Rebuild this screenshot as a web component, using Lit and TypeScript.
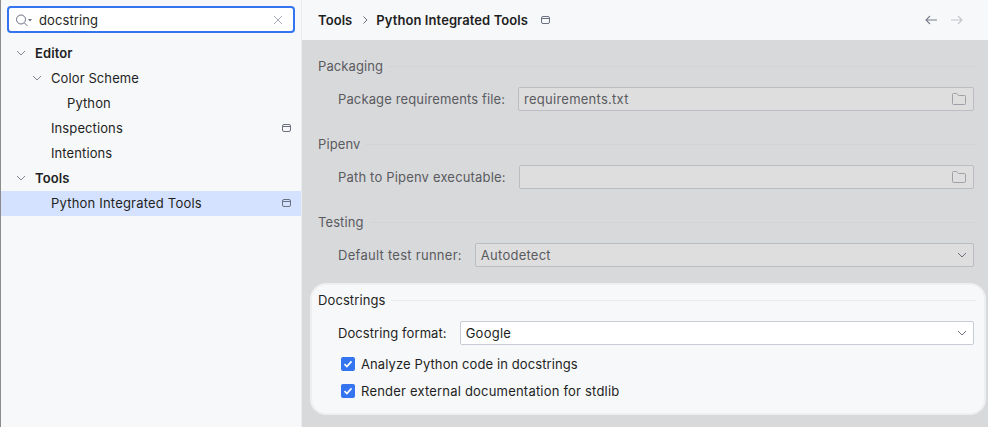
import {LitElement, html, css, svg} from "lit"
import {customElement} from "lit/decorators.js"

const chevronDown = html`<svg class="chev" viewBox="0 0 12 12"><path d="M2 4l4 4 4-4" fill="none" stroke="currentColor" stroke-width="1"/></svg>`

const pinIcon = html`<svg class="pin" viewBox="0 0 12 12"><rect x="1.5" y="2.5" width="8" height="7" rx="1.5" fill="none" stroke="currentColor"/><path d="M1.5 4.5h8" stroke="currentColor"/></svg>`

const folderIcon = html`<svg class="folder" viewBox="0 0 16 16"><path d="M1.5 3.5a1 1 0 011-1h3.2l1.8 2h6a1 1 0 011 1v7a1 1 0 01-1 1h-11a1 1 0 01-1-1z" fill="none" stroke="currentColor"/></svg>`

const checkMark = svg`<path d="M3.5 7.2l2.4 2.4 4.6-5.2" fill="none" stroke="#fff" stroke-width="1.7"/>`

interface TreeRow {
  label: string
  depth: number
  open?: boolean
  bold?: boolean
  pin?: boolean
  selected?: boolean
}

const rows: TreeRow[] = [
  {label: "Editor", depth: 0, open: true, bold: true},
  {label: "Color Scheme", depth: 1, open: true},
  {label: "Python", depth: 2},
  {label: "Inspections", depth: 1, pin: true},
  {label: "Intentions", depth: 1},
  {label: "Tools", depth: 0, open: true, bold: true},
  {label: "Python Integrated Tools", depth: 1, pin: true, selected: true},
]

@customElement("app-root")
export class AppRoot extends LitElement {
  static styles = css`
    :host {
      display: flex;
      width: 988px;
      height: 427px;
      overflow: hidden;
      font-family: Inter, "Liberation Sans", sans-serif;
      font-size: 13px;
      color: #1e1f22;
    }
    .sidebar {
      width: 302px;
      flex: none;
      box-sizing: border-box;
      background: #f7f8fa;
      border-left: 1px solid #8c8c8c;
      border-right: 1px solid #ebecf0;
    }
    .search {
      display: flex;
      align-items: center;
      height: 27px;
      box-sizing: border-box;
      margin: 6px 6px 8px 6px;
      padding: 0 10px 0 6px;
      background: #fff;
      border: 2px solid #3574f0;
      border-radius: 4px;
      letter-spacing: 0.1px;
    }
    .search .glass { width: 18px; height: 16px; color: #6c707e; flex: none; }
    .search span { flex: 1; margin-left: 6px; }
    .search .clear { width: 10px; height: 10px; color: #a8adbd; flex: none; }
    .row {
      display: flex;
      align-items: center;
      height: 25px;
      box-sizing: border-box;
      padding-right: 8px;
      padding-bottom: 1px;
    }
    .row.selected { background: #d4e2ff; }
    .row.bold { font-weight: 600; }
    .arrow { width: 12px; height: 12px; flex: none; color: #818594; margin-right: 8px; }
    .arrow-space { width: 12px; flex: none; margin-right: 8px; }
    .row .label { flex: 1; letter-spacing: 0.1px; }
    .row.selected .label { letter-spacing: 0.2px; }
    .pin { width: 12px; height: 12px; color: #6c707e; flex: none; }
    .main { flex: 1; display: flex; flex-direction: column; background: #d8d9db; min-width: 0; }
    .header {
      display: flex;
      align-items: center;
      height: 40px;
      flex: none;
      box-sizing: border-box;
      padding: 0 23px 0 16px;
      background: #f7f8fa;
      font-weight: 600;
      letter-spacing: 0.08px;
    }
    .header .sep { width: 12px; height: 12px; margin: 0 5px 0 7px; color: #6c707e; }
    .header .pin { margin-left: 12px; }
    .header .nav { margin-left: auto; display: flex; gap: 10px; }
    .nav svg { width: 16px; height: 16px; }
    .content { padding: 16px 2px 0 8px; }
    .group { padding: 0 10px 0 8px; color: #5a5b5f; }
    .group + .group { margin-top: 23px; }
    .title { display: flex; align-items: center; height: 20px; gap: 6px; letter-spacing: 0.1px; }
    .title::after { content: ""; flex: 1; height: 1px; background: #d2d3d6; }
    .field {
      display: flex;
      align-items: center;
      gap: 13px;
      margin: 11px 2px 0 20px;
      height: 24px;
    }
    .field .box {
      flex: 1;
      align-self: stretch;
      display: flex;
      align-items: center;
      justify-content: space-between;
      box-sizing: border-box;
      padding: 0 5px 0 5px;
      border: 1px solid #bcbdc2;
      border-radius: 2px;
      background: #dedede;
      letter-spacing: 0.25px;
    }
    .chev { width: 12px; height: 12px; color: #6c707e; }
    .folder { width: 16px; height: 16px; color: #a0a1a6; margin-right: 1px; }
    .group + .group.highlight {
      margin-top: 16px;
      padding: 5px 8px 9px 6px;
      background: #f7f8fa;
      border: 2px solid #eeeff1;
      border-radius: 16px;
      color: #1e1f22;
    }
    .highlight .title::after { background: #ebecf0; }
    .highlight .box { background: #fff; border-color: #c9ccd6; }
    .check {
      display: flex;
      align-items: center;
      gap: 6px;
      height: 27px;
      margin-left: 23px;
      letter-spacing: 0.1px;
    }
    .check.wide { letter-spacing: 0.2px; }
    .check svg { width: 14px; height: 14px; flex: none; }
    .checks { margin-top: 5px; }
  `

  renderRow(row: TreeRow) {
    const pad = 14 + row.depth * 16
    return html`
      <div class="row ${row.selected ? "selected" : ""} ${row.bold ? "bold" : ""}" style="padding-left: ${pad}px">
        ${row.open
          ? html`<svg class="arrow" viewBox="0 0 12 12"><path d="M2 4l4 4 4-4" fill="none" stroke="currentColor"/></svg>`
          : html`<span class="arrow-space"></span>`}
        <span class="label">${row.label}</span>
        ${row.pin ? pinIcon : ""}
      </div>
    `
  }

  // spacing: the source font is hinted, so each label runs a little wider or narrower
  renderField(label: string, spacing: number, value: string, trailing: unknown) {
    return html`
      <div class="field">
        <span style="letter-spacing: ${spacing}px">${label}</span>
        <div class="box"><span>${value}</span>${trailing}</div>
      </div>
    `
  }

  renderCheck(label: string, wide = false) {
    return html`
      <div class="check ${wide ? "wide" : ""}">
        <svg viewBox="0 0 14 14"><rect width="14" height="14" rx="2" fill="#3574f0"/>${checkMark}</svg>
        <span>${label}</span>
      </div>
    `
  }

  render() {
    return html`
      <aside class="sidebar">
        <div class="search">
          <svg class="glass" viewBox="0 0 18 16"><circle cx="6" cy="7.5" r="4.5" fill="none" stroke="currentColor"/><path d="M9.5 11l3 3" stroke="currentColor"/><path d="M13 7h4l-2 2.5z" fill="currentColor"/></svg>
          <span>docstring</span>
          <svg class="clear" viewBox="0 0 10 10"><path d="M1 1l8 8M9 1l-8 8" stroke="currentColor"/></svg>
        </div>
        ${rows.map(r => this.renderRow(r))}
      </aside>
      <main class="main">
        <header class="header">
          <span>Tools</span>
          <svg class="sep" viewBox="0 0 12 12"><path d="M4.5 2.5l3.5 3.5-3.5 3.5" fill="none" stroke="currentColor"/></svg>
          <span>Python Integrated Tools</span>
          ${pinIcon}
          <div class="nav">
            <svg viewBox="0 0 16 16"><path d="M14 8H3M7 4L3 8l4 4" fill="none" stroke="#7c7f8c" stroke-width="1.1"/></svg>
            <svg viewBox="0 0 16 16"><path d="M2 8h11M9 4l4 4-4 4" fill="none" stroke="#c4c6cc" stroke-width="1.1"/></svg>
          </div>
        </header>
        <div class="content">
          <section class="group">
            <div class="title">Packaging</div>
            ${this.renderField("Package requirements file:", 0.13, "requirements.txt", folderIcon)}
          </section>
          <section class="group">
            <div class="title">Pipenv</div>
            ${this.renderField("Path to Pipenv executable:", 0.18, "", folderIcon)}
          </section>
          <section class="group">
            <div class="title">Testing</div>
            ${this.renderField("Default test runner:", 0.27, "Autodetect", chevronDown)}
          </section>
          <section class="group highlight">
            <div class="title">Docstrings</div>
            ${this.renderField("Docstring format:", 0.08, "Google", chevronDown)}
            <div class="checks">
              ${this.renderCheck("Analyze Python code in docstrings")}
              ${this.renderCheck("Render external documentation for stdlib", true)}
            </div>
          </section>
        </div>
      </main>
    `
  }
}
